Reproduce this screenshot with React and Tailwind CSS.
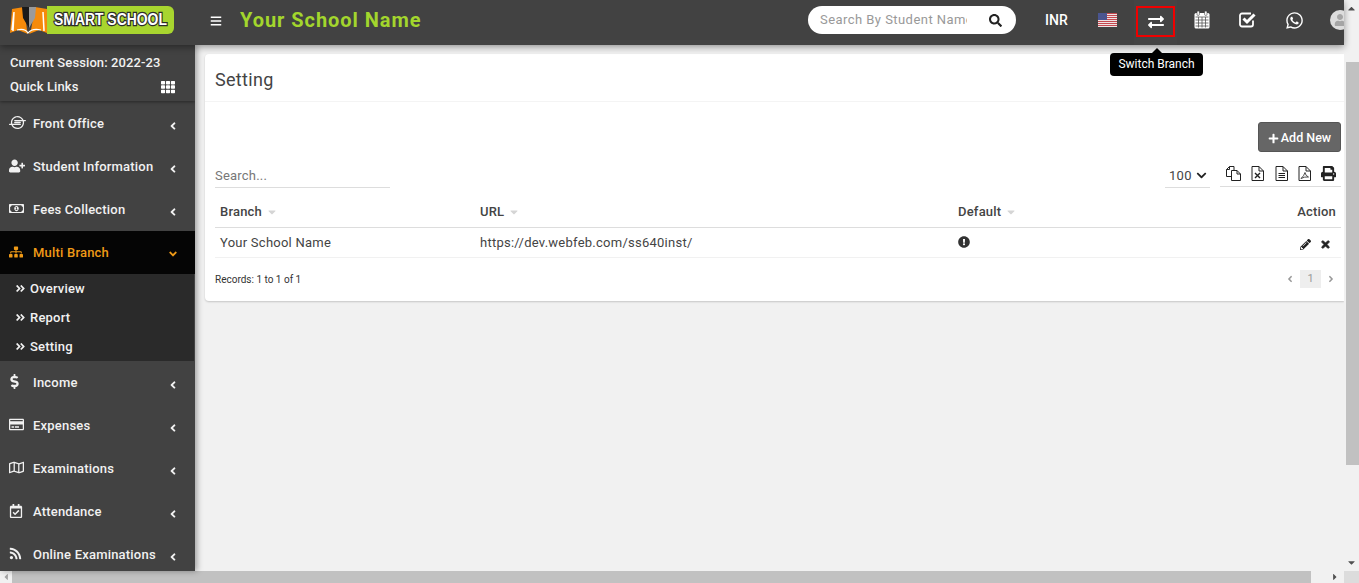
import React from 'react';
import {
  FaBars, FaSearch, FaExchangeAlt, FaWhatsapp, FaTh, FaIoxhost,
  FaUserPlus, FaRegMoneyBillAlt, FaSitemap, FaAngleLeft, FaAngleRight, FaAngleDown, FaAngleDoubleRight, FaDollarSign,
  FaRegCreditCard, FaRegMap, FaRegCalendarCheck, FaRss, FaPlus, FaPencilAlt, FaTimes, FaExclamationCircle,
  FaChevronDown, FaPrint, FaCaretDown, FaCaretUp, FaCaretLeft, FaCaretRight, FaUser,
} from 'react-icons/fa';

const Logo = () => (
  <div className="flex items-center h-7 w-[164px] shrink-0">
    <div className="w-[37px] h-7 shrink-0">
      <svg viewBox="0 0 37 28" className="w-[37px] h-7">
        <path d="M0 27 L2 3 L14 1 L17 24 L18 28 L8 24 Z" fill="#f58a0a" />
        <path d="M37 27 L37 3 L25 1 L21 24 L19 28 L29 24 Z" fill="#f58a0a" />
        <path d="M3 25 L4 6 L2 24 M34 25 L33 6 L34 24" stroke="#fff" strokeWidth="1.5" fill="none" />
        <path d="M12 1 H19 L19 22 L13 12 Z" fill="#1a1a1a" />
        <path d="M19 1 H26 L25 12 L19 22 Z" fill="#9a9a9a" />
        <path d="M7 24 Q15 22 18 27 Q22 22 31 24" stroke="#fff" strokeWidth="1.2" fill="none" />
      </svg>
    </div>
    <div className="flex-1 min-w-0 h-7 bg-[#a8d52f] rounded-r-md flex items-center pl-[7px] overflow-hidden">
      <span className="inline-block origin-left scale-x-[0.87] font-['Liberation_Sans',sans-serif] font-bold text-[16px] leading-none text-white whitespace-nowrap [-webkit-text-stroke:2.5px_#2b2b2b] [paint-order:stroke_fill]">
        SMART SCHOOL
      </span>
    </div>
  </div>
);

const Flag = () => (
  <svg viewBox="0 0 19 14" className="w-[19px] h-[14px]">
    <rect width="19" height="14" fill="#f4f4f4" />
    {[0, 2, 4, 6, 8, 10, 12].map((y) => (
      <rect key={y} y={y} width="19" height="1.1" fill="#c4484f" />
    ))}
    <rect width="9" height="7" fill="#4a5590" />
  </svg>
);

// solid calendar with the fine day grid, as in the top bar
const CalendarIcon = () => (
  <svg viewBox="0 0 16 18" className="w-[16px] h-[18px]">
    <rect x="0.5" y="2" width="15" height="15.5" rx="1.5" fill="#fff" />
    <rect x="3" y="0" width="2.4" height="4.4" rx="1" fill="#fff" stroke="#424242" strokeWidth="0.6" />
    <rect x="10.6" y="0" width="2.4" height="4.4" rx="1" fill="#fff" stroke="#424242" strokeWidth="0.6" />
    <path d="M1.5 6 H14.5 M1.5 9 H14.5 M1.5 12 H14.5 M1.5 15 H14.5 M4.5 6 V16.5 M8 6 V16.5 M11.5 6 V16.5" stroke="#555" strokeWidth="0.8" />
  </svg>
);

const CheckIcon = () => (
  <svg viewBox="0 0 18 16" className="w-[18px] h-[16px]">
    <path d="M14 8.5 V12.5 A2 2 0 0 1 12 14.5 H3 A2 2 0 0 1 1 12.5 V3.5 A2 2 0 0 1 3 1.5 H12" fill="none" stroke="#fff" strokeWidth="1.8" />
    <path d="M4.5 6.5 L8 10 L15.5 2.5" fill="none" stroke="#fff" strokeWidth="3" />
  </svg>
);

// thin outlined export icons
const Doc = ({ children }) => (
  <svg viewBox="0 0 13 15" className="w-[13px] h-[15px]" fill="none" stroke="#222" strokeWidth="1">
    <path d="M1 0.5 H8 L12.5 5 V14.5 H1 Z M8 0.5 V5 H12.5" />
    {children}
  </svg>
);

const CopyIcon = () => (
  <svg viewBox="0 0 15 15" className="w-[15px] h-[15px]" fill="none" stroke="#222" strokeWidth="1">
    <path d="M0.5 3.5 L3.5 0.5 H8 V4 M3.5 0.5 V3.5 H0.5 V10.5 H5.5" />
    <path d="M5.5 4.5 H11 L14.5 8 V14.5 H5.5 Z M11 4.5 V8 H14.5" fill="#fff" />
  </svg>
);

const menu = [
  { label: 'Front Office', icon: <FaIoxhost className="text-[17px]" /> },
  { label: 'Student Information', icon: <FaUserPlus className="text-[16px]" /> },
  { label: 'Fees Collection', icon: <FaRegMoneyBillAlt className="text-[15px]" /> },
  {
    label: 'Multi Branch',
    icon: <FaSitemap className="text-[14px]" />,
    active: true,
    children: ['Overview', 'Report', 'Setting'],
  },
  { label: 'Income', icon: <FaDollarSign className="text-[15px] -ml-[2px]" /> },
  { label: 'Expenses', icon: <FaRegCreditCard className="text-[15px]" /> },
  { label: 'Examinations', icon: <FaRegMap className="text-[15px]" /> },
  { label: 'Attendance', icon: <FaRegCalendarCheck className="text-[14px]" /> },
  { label: 'Online Examinations', icon: <FaRss className="text-[13px]" /> },
];

const Sidebar = () => (
  <aside className="w-[195px] shrink-0 bg-[#424242] text-[#f1f1f1] text-[13px] font-medium tracking-[0.2px] relative z-[5] shadow-[2px_0_6px_rgba(0,0,0,0.35)] overflow-hidden">
    <div className="h-[56px] pl-[10px] pr-[20px] pt-[9px] tracking-[0.1px] shadow-[0_1px_3px_rgba(0,0,0,0.4)]">
      <div className="h-[18px] leading-[18px] whitespace-nowrap">Current Session: 2022-23</div>
      <div className="flex items-center justify-between mt-[6px] h-[18px]">
        <span>Quick Links</span>
        <FaTh className="text-[14px] text-white" />
      </div>
    </div>
    <div className="pt-[1px]">
      {menu.map((item) => (
        <div key={item.label}>
          <div className={`h-[43px] flex items-center pl-[9px] pr-[18px] ${item.active ? 'bg-[#050505] text-[#ef9a17]' : ''}`}>
            <span className="w-[24px] shrink-0 flex items-center -mt-[2px]">{item.icon}</span>
            <span className="flex-1 whitespace-nowrap">{item.label}</span>
            {item.active ? (
              <FaAngleDown className="text-[12px] w-[8px] mt-[2px]" />
            ) : (
              <FaAngleLeft className="text-[12px] w-[8px] mt-[4px]" />
            )}
          </div>
          {item.children && (
            <div className="bg-[#2a2a2a] h-[87px] pl-[15px] mr-[1px]">
              {item.children.map((c) => (
                <div key={c} className="h-[29px] flex items-center">
                  <FaAngleDoubleRight className="text-[11px] w-[11px] mr-[4px]" />
                  <span>{c}</span>
                </div>
              ))}
            </div>
          )}
        </div>
      ))}
    </div>
  </aside>
);

const Header = () => (
  <header className="h-[45px] shrink-0 bg-[#424242] flex items-center pb-[5px] relative z-10 shadow-[0_2px_7px_rgba(0,0,0,0.4)]">
    <div className="pl-[10px] w-[195px] shrink-0">
      <Logo />
    </div>
    <FaBars className="ml-[15px] mt-[2px] text-[12px] w-[12px] text-white" />
    <h1 className="ml-[18px] text-[20px] font-bold tracking-[0.95px] text-[#a3d62d] whitespace-nowrap">Your School Name</h1>
    <div className="ml-auto flex items-center h-[40px] self-start">
      <div className="w-[208px] h-7 bg-white rounded-full flex items-center pl-[12px] pr-[14px]">
        <input
          readOnly
          placeholder="Search By Student Name"
          className="w-[147px] bg-transparent outline-none text-[13px] tracking-[0.45px] placeholder:text-[#999]"
        />
        <FaSearch className="ml-auto text-[13px] text-[#222]" />
      </div>
      <div className="ml-[29px] w-[30px] overflow-hidden text-[14px] font-medium text-white">INR</div>
      <div className="ml-[23px]"><Flag /></div>
      <div className="relative ml-[17px] w-[43px] h-[45px] self-start bg-[#444] flex justify-center">
        <div className="w-[39px] h-[31px] mt-[6px] border-2 border-[#f00000] flex items-center justify-center">
          <FaExchangeAlt className="text-[16px] text-white" />
        </div>
        <div className="absolute top-[53px] left-[-24px] w-[93px] h-[23px] rounded bg-black text-white text-[12px] pb-[2px] flex items-center justify-center whitespace-nowrap">
          Switch Branch
          <span className="absolute -top-[5px] left-[42px] w-0 h-0 border-x-[5px] border-x-transparent border-b-[5px] border-b-black" />
        </div>
      </div>
      <div className="ml-[17px]"><CalendarIcon /></div>
      <div className="ml-[29px]"><CheckIcon /></div>
      <FaWhatsapp className="ml-[29px] text-[19px] w-[17px] text-white" />
      <div className="ml-[27px] w-[14px] overflow-hidden">
        <div className="w-[20px] h-[20px] rounded-full bg-[#dcdcdc] flex items-center justify-center">
          <FaUser className="text-[12px] text-[#a5a5a5]" />
        </div>
      </div>
    </div>
  </header>
);

const SortHead = ({ children }) => (
  <span className="inline-flex items-center">
    {children}
    <FaCaretDown className="ml-[4px] text-[12px] text-[#d5d5d5]" />
  </span>
);

const Setting = () => (
  <main className="flex-1 min-w-0 bg-[#f1f1f1] pt-[9px] pl-[10px] overflow-hidden text-[#444] font-['Roboto',sans-serif]">
    <div className="bg-white rounded-l h-[247px] shadow-[0_1px_2px_rgba(0,0,0,0.18)]">
      <div className="h-[48px] pl-[10px] border-b border-[#f4f4f4] flex items-center">
        <h2 className="text-[18px] leading-none text-[#444] mt-[4px] tracking-[0.3px]">Setting</h2>
      </div>
      <div className="pr-[3px]">
        <div className="flex justify-end pt-[20px]">
          <button className="w-[83px] h-[30px] pt-[2px] bg-[#666] border border-[#555] rounded-[3px] text-white text-[12.5px] font-medium flex items-center justify-center">
            <FaPlus className="text-[11px] mr-[2px]" />
            Add New
          </button>
        </div>
        <div className="flex items-end h-[36px] pl-[10px]">
          <div className="w-[175px] h-[24px] border-b border-[#ddd] text-[13px] text-[#777] tracking-[0.2px] flex items-center">Search...</div>
          <div className="ml-auto w-[45px] h-[24px] border-b border-[#ddd] flex items-center pl-[4px] text-[13px] tracking-[0.3px] text-[#444]">
            100
            <FaChevronDown className="ml-[4px] text-[11px] text-[#222]" />
          </div>
          <div className="ml-[10px] mb-px w-[121px] h-[30px] pt-[3px] border-b border-[#ddd] flex items-center justify-between pl-[6px] pr-[5px] text-[#222]">
            <CopyIcon />
            <Doc><path d="M4 7 L9 12 M9 7 L4 12" strokeWidth="1.4" /></Doc>
            <Doc><path d="M3.5 7.5 H10 M3.5 9.5 H10 M3.5 11.5 H10" /></Doc>
            <Doc><path d="M3 12.5 Q6 10 7 6.5 Q7.5 10 10.5 11 Q6.5 10.5 3 12.5 Z" strokeWidth="0.8" /></Doc>
            <FaPrint className="text-[15px]" />
          </div>
        </div>
        <div className="pl-[10px] pt-[9px]">
          <table className="w-full table-fixed border-collapse text-[13px]">
            <colgroup>
              <col className="w-[260px]" />
              <col className="w-[478px]" />
              <col />
              <col className="w-[80px]" />
            </colgroup>
            <thead>
              <tr className="h-[30px] border-b border-[#ddd] tracking-[0.2px]">
                <th className="text-left font-medium pl-[5px]"><SortHead>Branch</SortHead></th>
                <th className="text-left font-medium pl-[5px]"><SortHead>URL</SortHead></th>
                <th className="text-left font-medium pl-[5px]"><SortHead>Default</SortHead></th>
                <th className="text-right font-medium pr-[5px]">Action</th>
              </tr>
            </thead>
            <tbody>
              <tr className="h-[30px] border-b border-[#f1f1f1] tracking-[0.25px]">
                <td className="pl-[5px] pt-[2px]">Your School Name</td>
                <td className="pl-[5px] pt-[2px]">https://dev.webfeb.com/ss640inst/</td>
                <td className="pl-[5px]"><FaExclamationCircle className="text-[12px] text-[#333]" /></td>
                <td className="pr-[10px]">
                  <div className="flex justify-end items-center gap-[9px] text-[#222] text-[11px] pt-[5px]">
                    <FaPencilAlt />
                    <FaTimes className="stroke-current stroke-[40]" />
                  </div>
                </td>
              </tr>
            </tbody>
          </table>
        </div>
        <div className="flex items-center h-[43px] pl-[10px] pr-[5px] text-[10px] text-[#333]">
          <span>Records: 1 to 1 of 1</span>
          <div className="ml-auto flex items-center text-[#999]">
            <FaAngleLeft className="text-[10px] mr-[5px]" />
            <span className="w-[21px] h-[18px] bg-[#eee] flex items-center justify-center text-[11px]">1</span>
            <FaAngleRight className="text-[10px] ml-[5px]" />
          </div>
        </div>
      </div>
    </div>
  </main>
);

const VerticalBar = () => (
  <div className="w-[15px] shrink-0 bg-[#f1f1f1] flex flex-col">
    <div className="h-[17px] shrink-0 flex items-center justify-center">
      <FaCaretUp className="text-[11px] text-[#505050]" />
    </div>
    <div className="h-[45px] shrink-0" />
    <div className="w-[13px] ml-[2px] h-[403px] bg-[#c1c1c1] shrink-0" />
    <div className="flex-1" />
    <div className="h-[17px] shrink-0 flex items-center justify-center">
      <FaCaretDown className="text-[11px] text-[#505050]" />
    </div>
  </div>
);

const HorizontalBar = () => (
  <div className="h-[12px] shrink-0 flex bg-[#f1f1f1]">
    <div className="w-[12px] flex items-center justify-center">
      <FaCaretLeft className="text-[10px] text-[#a3a3a3]" />
    </div>
    <div className="w-[1299px] bg-[#c1c1c1]" />
    <div className="flex-1 flex items-center justify-end pr-[4px]">
      <FaCaretRight className="text-[10px] text-[#505050]" />
    </div>
    <div className="w-[15px] bg-[#dcdcdc]" />
  </div>
);

export default function App() {
  return (
    <div className="h-[583px] w-[1359px] overflow-hidden flex flex-col font-['Roboto',sans-serif]">
      <div className="flex-1 min-h-0 flex">
        <div className="flex-1 min-w-0 flex flex-col">
          <Header />
          <div className="flex-1 min-h-0 flex">
            <Sidebar />
            <Setting />
          </div>
        </div>
        <VerticalBar />
      </div>
      <HorizontalBar />
    </div>
  );
}
